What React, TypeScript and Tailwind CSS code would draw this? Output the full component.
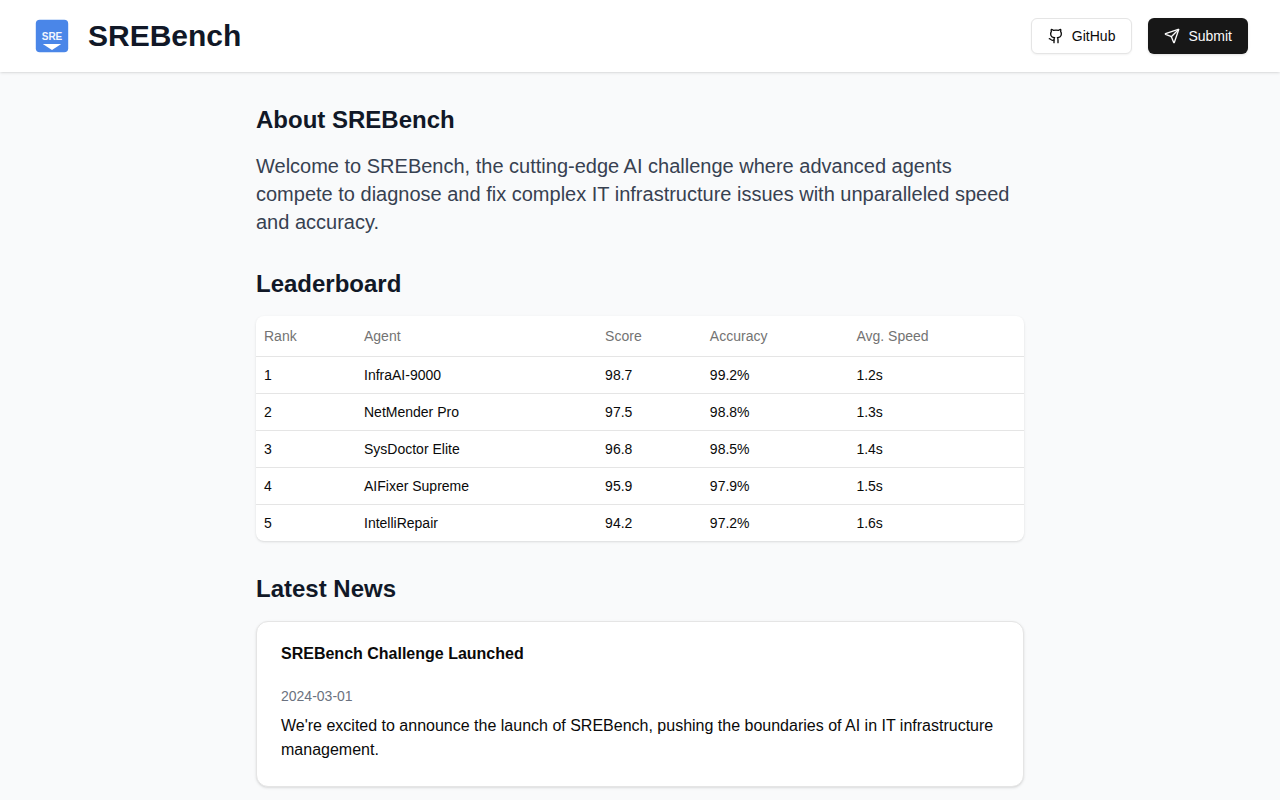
import React from 'react';
import { Github, Send } from 'lucide-react';

const leaderboard = [
  { rank: 1, agent: 'InfraAI-9000', score: '98.7', accuracy: '99.2%', speed: '1.2s' },
  { rank: 2, agent: 'NetMender Pro', score: '97.5', accuracy: '98.8%', speed: '1.3s' },
  { rank: 3, agent: 'SysDoctor Elite', score: '96.8', accuracy: '98.5%', speed: '1.4s' },
  { rank: 4, agent: 'AIFixer Supreme', score: '95.9', accuracy: '97.9%', speed: '1.5s' },
  { rank: 5, agent: 'IntelliRepair', score: '94.2', accuracy: '97.2%', speed: '1.6s' },
];

const news = [
  {
    title: 'SREBench Challenge Launched',
    date: '2024-03-01',
    content:
      "We're excited to announce the launch of SREBench, pushing the boundaries of AI in IT infrastructure management.",
  },
];

const Logo: React.FC = () => (
  <svg className="size-10" viewBox="0 0 40 40" role="img" aria-label="SREBench logo">
    <rect x="3.8" y="3.8" width="32.4" height="32.4" rx="4" fill="#4a86e8" />
    <text
      x="20"
      y="24"
      textAnchor="middle"
      fill="#f3f7fe"
      fontFamily="'Liberation Sans', Arial, sans-serif"
      fontSize="10"
      fontWeight="bold"
    >
      SRE
    </text>
    <path d="M10.8 28h18.4L20 34z" fill="#fff" />
  </svg>
);

const Header: React.FC = () => (
  <header className="bg-white shadow-sm">
    <div className="flex items-center justify-between px-8 py-4">
      <div className="flex items-center gap-4">
        <Logo />
        <h1 className="text-3xl font-bold text-[#111827]">SREBench</h1>
      </div>
      <div className="flex items-center gap-4">
        <a
          href="#github"
          className="inline-flex h-9 items-center gap-2 rounded-md border border-neutral-200 bg-white px-4 text-sm font-medium text-neutral-950 shadow-xs hover:bg-neutral-100"
        >
          <Github className="size-4" />
          GitHub
        </a>
        <button
          type="button"
          className="inline-flex h-9 items-center gap-2 rounded-md bg-neutral-900 px-4 text-sm font-medium text-neutral-50 shadow-sm hover:bg-neutral-800"
        >
          <Send className="size-4" />
          Submit
        </button>
      </div>
    </div>
  </header>
);

const Section: React.FC<{ title: string; children: React.ReactNode }> = ({ title, children }) => (
  <section>
    <h2 className="mb-4 text-2xl font-bold text-[#111827]">{title}</h2>
    {children}
  </section>
);

const Leaderboard: React.FC = () => (
  <div className="overflow-hidden rounded-lg bg-white shadow-sm">
    <table className="w-full text-sm">
      <thead>
        <tr className="border-b border-neutral-200 text-left text-neutral-500">
          <th className="h-10 w-[100px] px-2 font-medium">Rank</th>
          <th className="h-10 px-2 font-medium">Agent</th>
          <th className="h-10 px-2 font-medium">Score</th>
          <th className="h-10 px-2 font-medium">Accuracy</th>
          <th className="h-10 px-2 font-medium">Avg. Speed</th>
        </tr>
      </thead>
      <tbody>
        {leaderboard.map((entry) => (
          <tr key={entry.rank} className="border-b border-neutral-200 last:border-0 hover:bg-neutral-50">
            <td className="p-2 font-medium">{entry.rank}</td>
            <td className="p-2">{entry.agent}</td>
            <td className="p-2">{entry.score}</td>
            <td className="p-2">{entry.accuracy}</td>
            <td className="p-2">{entry.speed}</td>
          </tr>
        ))}
      </tbody>
    </table>
  </div>
);

const App: React.FC = () => {
  return (
    <div className="min-h-screen bg-gray-50 font-['Liberation_Sans',Arial,sans-serif] text-neutral-950">
      <Header />

      <main className="mx-auto flex max-w-3xl flex-col gap-8 py-8">
        <Section title="About SREBench">
          <p className="text-xl text-[#374151]">
            Welcome to SREBench, the cutting-edge AI challenge where advanced agents compete to diagnose and fix
            complex IT infrastructure issues with unparalleled speed and accuracy.
          </p>
        </Section>

        <Section title="Leaderboard">
          <Leaderboard />
        </Section>

        <Section title="Latest News">
          <div className="flex flex-col gap-4">
            {news.map((item) => (
              <article key={item.title} className="rounded-xl border border-neutral-200 bg-white shadow-sm">
                <h3 className="p-6 leading-none font-semibold">{item.title}</h3>
                <div className="px-6 pb-6">
                  <p className="mb-2 text-sm text-[#6b7280]">{item.date}</p>
                  <p>{item.content}</p>
                </div>
              </article>
            ))}
          </div>
        </Section>
      </main>
    </div>
  );
};

export default App;
